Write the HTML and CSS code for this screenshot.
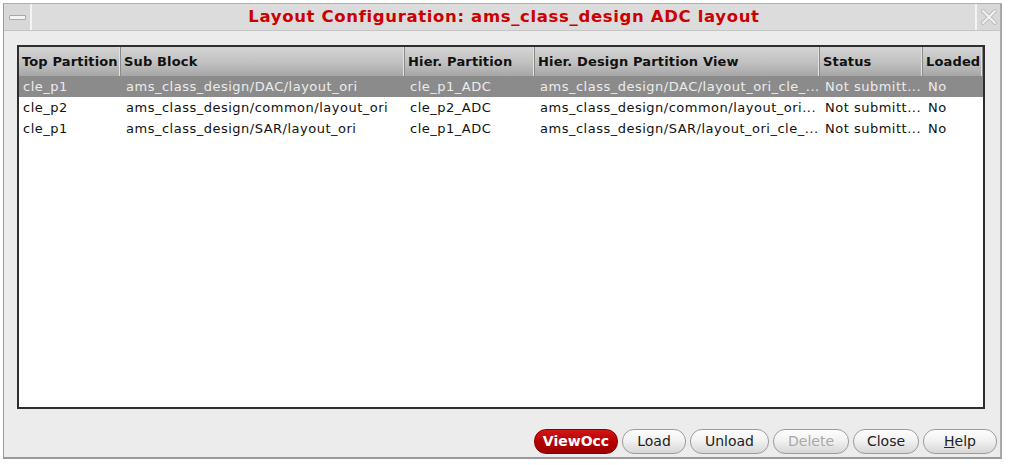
FILE: index.html
```html
<!DOCTYPE html>
<html>
<head>
<meta charset="utf-8">
<link rel="stylesheet" href="styles.css">
</head>
<body>
<div class="window">
  <div class="titlebar">
    <div class="tb-btn tb-min"><span class="min-bar"></span></div>
    <div class="title">Layout Configuration: ams_class_design ADC layout</div>
    <div class="tb-btn tb-close">
      <svg width="18" height="18" viewBox="0 0 18 18">
        <path d="M3 3 L15 15 M15 3 L3 15" stroke="#bdbdbd" stroke-width="4" stroke-linecap="round" fill="none"/>
        <path d="M3 3 L15 15 M15 3 L3 15" stroke="#f2f2f2" stroke-width="2" stroke-linecap="round" fill="none"/>
      </svg>
    </div>
  </div>
  <div class="content">
    <div class="frame">
      <div class="grid header">
        <div class="hc">Top Partition</div>
        <div class="hc">Sub Block</div>
        <div class="hc">Hier. Partition</div>
        <div class="hc">Hier. Design Partition View</div>
        <div class="hc">Status</div>
        <div class="hc">Loaded</div>
      </div>
      <div class="grid row selected">
        <div class="c">cle_p1</div>
        <div class="c">ams_class_design/DAC/layout_ori</div>
        <div class="c">cle_p1_ADC</div>
        <div class="c">ams_class_design/DAC/layout_ori_cle_...</div>
        <div class="c">Not submitt...</div>
        <div class="c">No</div>
      </div>
      <div class="grid row">
        <div class="c">cle_p2</div>
        <div class="c">ams_class_design/common/layout_ori</div>
        <div class="c">cle_p2_ADC</div>
        <div class="c">ams_class_design/common/layout_ori...</div>
        <div class="c">Not submitt...</div>
        <div class="c">No</div>
      </div>
      <div class="grid row">
        <div class="c">cle_p1</div>
        <div class="c">ams_class_design/SAR/layout_ori</div>
        <div class="c">cle_p1_ADC</div>
        <div class="c">ams_class_design/SAR/layout_ori_cle_...</div>
        <div class="c">Not submitt...</div>
        <div class="c">No</div>
      </div>
    </div>
    <div class="buttons">
      <div class="btn primary w-viewocc">ViewOcc</div>
      <div class="btn w-load">Load</div>
      <div class="btn w-unload">Unload</div>
      <div class="btn disabled w-delete">Delete</div>
      <div class="btn w-close">Close</div>
      <div class="btn w-help"><u>H</u>elp</div>
    </div>
  </div>
</div>
</body>
</html>
```

FILE: styles.css
```css
html, body {
  margin: 0;
  padding: 0;
  background: #ffffff;
}
body {
  font-family: "DejaVu Sans", Verdana, sans-serif;
}
.window {
  margin: 3px 0 0 3px;
  width: 996px;
  height: 453px;
  border-left: 1px solid #9a9a9a;
  border-top: 1px solid #b0b0b0;
  border-right: 2px solid #a8a8a8;
  border-bottom: 2px solid #9a9a9a;
  background: #ececec;
  display: flex;
  flex-direction: column;
}
.titlebar {
  height: 26px;
  display: flex;
  border-bottom: 1px solid #c4c4c4;
  background: #dcdcdc;
}
.tb-btn {
  width: 26px;
  display: flex;
  align-items: center;
  justify-content: center;
  background: #d8d8d8;
}
.tb-min {
  border-right: 2px solid #f4f4f4;
}
.min-bar {
  display: block;
  width: 15px;
  height: 3px;
  background: #f4f4f4;
  border: 1px solid #a8a8a8;
  border-radius: 1px;
}
.tb-close {
  width: 23px;
  border-left: 2px solid #f4f4f4;
}
.title {
  flex: 1;
  text-align: center;
  color: #cc0000;
  font-weight: bold;
  font-size: 16.5px;
  letter-spacing: 0.65px;
  line-height: 26px;
  padding-left: 1px;
}
.content {
  flex: 1;
  display: flex;
  flex-direction: column;
  padding: 14px 15px 0 13px;
}
.frame {
  height: 360px;
  border: 2px solid #2e2e2e;
  background: #ffffff;
}
.grid {
  display: grid;
  grid-template-columns: 102px 284px 130px 285px 103px 60px;
}
.header {
  height: 29px;
  background: linear-gradient(#d4d4d4, #c0c0c0 55%, #a6a6a6);
}
.hc {
  font-weight: bold;
  font-size: 13px;
  letter-spacing: 0.15px;
  color: #111111;
  line-height: 30px;
  padding-left: 3px;
  border-right: 1px solid #8a8a8a;
  box-shadow: inset -1px 0 0 #e2e2e2;
  white-space: nowrap;
  overflow: hidden;
}
.row {
  height: 21px;
}
.c {
  font-size: 13px;
  letter-spacing: 0.5px;
  line-height: 21px;
  color: #111111;
  padding-left: 5px;
  white-space: nowrap;
  overflow: hidden;
}
.row .c:first-child {
  padding-left: 4px;
}
.selected {
  background: #8b8b8b;
}
.selected .c {
  color: #ececec;
}
.buttons {
  display: flex;
  justify-content: flex-end;
  gap: 4px;
  margin-top: 20px;
  margin-right: -12px;
}
.btn {
  height: 23px;
  border: 1px solid #9c9c9c;
  border-radius: 12px;
  background: linear-gradient(#fdfdfd, #f2f2f2 45%, #d6d6d6);
  font-size: 14px;
  line-height: 23px;
  color: #222222;
  text-align: center;
  box-sizing: content-box;
}
.btn.primary {
  background: linear-gradient(#d01818, #b80000 50%, #9a0000);
  border-color: #8a0000;
  color: #ffffff;
  font-weight: bold;
}
.btn.disabled {
  color: #a8a8a8;
}
.w-viewocc { width: 82px; }
.w-load { width: 62px; }
.w-unload { width: 77px; }
.w-delete { width: 74px; }
.w-close { width: 64px; }
.w-help { width: 72px; }
```
